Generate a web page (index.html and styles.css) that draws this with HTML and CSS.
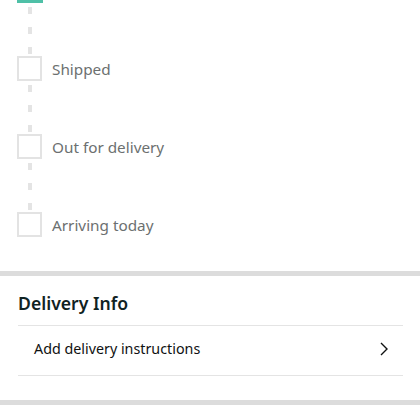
FILE: index.html
```html
<!DOCTYPE html>
<html lang="en">
  <head>
    <meta charset="utf-8" />
    <title>Order tracking</title>
    <link rel="stylesheet" href="styles.css">
  </head>
  <body>
    <div class="track">
      <div class="tail"></div>
      <div class="dash"></div>
      <div class="step">
        <div class="check"></div>
        <span class="label">Shipped</span>
      </div>
      <div class="dash"></div>
      <div class="step">
        <div class="check"></div>
        <span class="label">Out for delivery</span>
      </div>
      <div class="dash"></div>
      <div class="step">
        <div class="check"></div>
        <span class="label">Arriving today</span>
      </div>
    </div>
    <div class="sep"></div>
    <div class="info">
      <h2 class="title">Delivery Info</h2>
      <div class="row">
        <span>Add delivery instructions</span>
        <svg class="chev" width="10" height="16" viewBox="0 0 10 16">
          <path d="M2 2 L8 8 L2 14" fill="none" stroke="#0f1111" stroke-width="1.4"/>
        </svg>
      </div>
    </div>
    <div class="sep bottom"></div>
  </body>
</html>
```

FILE: styles.css
```css
html {
  font-family: "Noto Sans", "Open Sans", sans-serif;
}
body {
  margin: 0;
  background: #fff;
}
.track {
  padding-left: 17px;
  display: flex;
  flex-flow: column;
}
.tail {
  width: 26px;
  height: 3px;
  background: #4fc0a7;
}
.step {
  display: flex;
  align-items: center;
  height: 25px;
}
.check {
  width: 21px;
  height: 21px;
  border: 2px solid #e3e3e3;
  flex: none;
}
.dash {
  width: 4px;
  height: 53px;
  margin-left: 11px;
  background: repeating-linear-gradient(to bottom, transparent 0, transparent 4px, #e4e4e4 4px, #e4e4e4 11px, transparent 11px, transparent 20px);
}
.label {
  margin-left: 10px;
  font-size: 15.3px;
  color: #6c7070;
}
.sep {
  height: 5px;
  background: #dcdcdc;
  margin-top: 34px;
}
.info {
  padding: 0 17px 0 18px;
}
.title {
  margin: 0;
  padding: 16px 0 11px;
  font-size: 17.6px;
  font-weight: 600;
  color: #102222;
  line-height: 22px;
  border-bottom: 1px solid #e4e4e4;
}
.row {
  display: flex;
  align-items: center;
  justify-content: space-between;
  height: 45px;
  padding: 0 14px 4px 16px;
  font-size: 14.3px;
  color: #0f1111;
  border-bottom: 1px solid #e4e4e4;
}
.chev {
  display: block;
}
.sep.bottom {
  margin-top: 24px;
}
```
